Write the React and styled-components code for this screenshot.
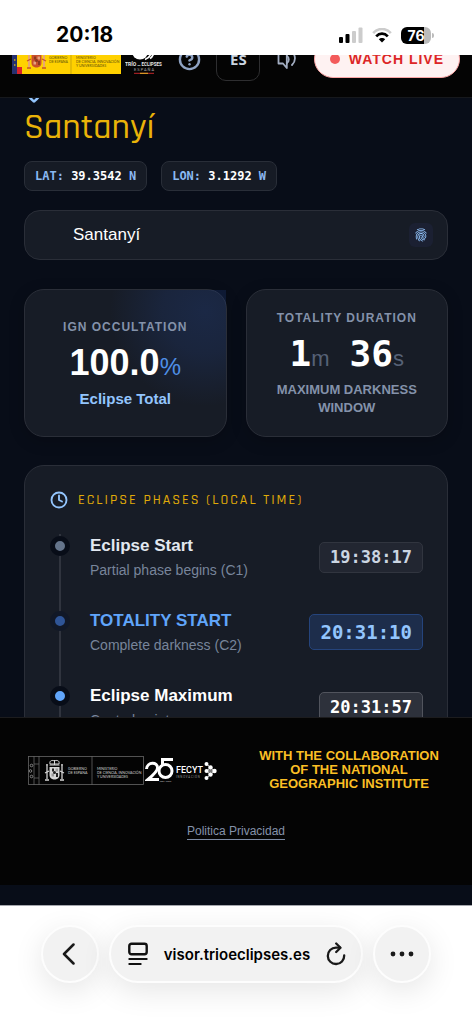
import React from "react";
import { useState } from "react";
import styled, { createGlobalStyle } from "styled-components";
import { CircleHelp, Clock, MapPin } from "lucide-react";
import { IoFingerPrint } from "react-icons/io5";

const phases = [
    { title: "Eclipse Start", text: "Partial phase begins (C1)", time: "19:38:17", kind: "start" },
    { title: "TOTALITY START", text: "Complete darkness (C2)", time: "20:31:10", kind: "totality" },
    { title: "Eclipse Maximum", text: "Central point", time: "20:31:57", kind: "maximum" },
];

const kinds = {
    start: { title: "#e2e8f0", dot: "#64748b", halo: "#080d18", time: "#cbd5e1", bg: "#222631", border: "#31353f" },
    totality: { title: "#60a5fa", dot: "#2f5597", halo: "#111827", time: "#93c5fd", bg: "#1d2d4b", border: "#25447c" },
    maximum: { title: "#ffffff", dot: "#60a5fa", halo: "#080d18", time: "#ffffff", bg: "#2d313b", border: "#51545d" },
};

export default function App() {

    const [place, setPlace] = useState("Santanyí");

    return (
        <Page>
            <Global />
            <StatusBar>
                <StatusTime>20:18</StatusTime>
                <StatusIcons>
                    <SignalIcon />
                    <WifiIcon />
                    <Battery><span>76</span></Battery>
                </StatusIcons>
            </StatusBar>

            <Header>
                <HeaderRow>
                    <HeaderLogos>
                        <GovernmentLogo />
                        <TrioLogo />
                    </HeaderLogos>
                    <IconButton type="button" aria-label="Help"><CircleHelp size={23} strokeWidth={2.5} /></IconButton>
                    <LangButton type="button">ES</LangButton>
                    <IconButton type="button" aria-label="Read aloud"><AudioIcon /></IconButton>
                    <LiveLink href="#live"><LiveDot />WATCH LIVE</LiveLink>
                </HeaderRow>
            </Header>

            <Main>
                <PinRow><MapPin size={20} strokeWidth={3} /></PinRow>
                <Title>Santanyí</Title>
                <Coords>
                    <Coord>LAT: <b>39.3542</b> N</Coord>
                    <Coord>LON: <b>3.1292</b> W</Coord>
                </Coords>

                <SearchBox>
                    <SearchInput aria-label="Location" value={place} onChange={(e) => setPlace(e.target.value)} />
                    <FingerButton type="button" aria-label="Use my location"><IoFingerPrint size={14} /></FingerButton>
                </SearchBox>

                <Cards>
                    <Card>
                        <GlowLayer><Glow /></GlowLayer>
                        <CardLabel>IGN OCCULTATION</CardLabel>
                        <Value>100.0<Percent>%</Percent></Value>
                        <Result>Eclipse Total</Result>
                    </Card>
                    <Card>
                        <CardLabel>TOTALITY DURATION</CardLabel>
                        <Duration>
                            <span>1<Unit>m</Unit></span>
                            <span>36<Unit>s</Unit></span>
                        </Duration>
                        <CardNote>MAXIMUM DARKNESS WINDOW</CardNote>
                    </Card>
                </Cards>

                <PhasesCard>
                    <PhasesTitle><Clock size={18} strokeWidth={2.5} />ECLIPSE PHASES (LOCAL TIME)</PhasesTitle>
                    <PhaseList>
                        {phases.map((phase) => (
                            <Phase key={phase.title}>
                                <Marker $kind={phase.kind} />
                                <div>
                                    <PhaseName $kind={phase.kind}>{phase.title}</PhaseName>
                                    <PhaseText>{phase.text}</PhaseText>
                                </div>
                                <Time $kind={phase.kind}>{phase.time}</Time>
                            </Phase>
                        ))}
                    </PhaseList>
                </PhasesCard>
            </Main>

            <Footer>
                <FooterRow>
                    <FooterLogos>
                        <GovernmentLogoMono />
                        <FecytLogo />
                    </FooterLogos>
                    <Collaboration>WITH THE COLLABORATION OF THE NATIONAL GEOGRAPHIC INSTITUTE</Collaboration>
                </FooterRow>
                <PrivacyLink href="#privacy">Politica Privacidad</PrivacyLink>
            </Footer>

            <BrowserBar>
                <RoundButton type="button" aria-label="Back"><BackIcon /></RoundButton>
                <AddressBar>
                    <BarButton type="button" aria-label="Page menu"><ReaderIcon /></BarButton>
                    <Address>visor.trioeclipses.es</Address>
                    <BarButton type="button" aria-label="Reload"><ReloadIcon /></BarButton>
                </AddressBar>
                <RoundButton type="button" aria-label="More"><MoreIcon /></RoundButton>
            </BrowserBar>
        </Page>
    );
};

function SignalIcon() {
    return (
        <svg width="24" height="16" viewBox="0 0 24 16">
            <rect x="0" y="10" width="4" height="6" rx="1" fill="#000" />
            <rect x="6.5" y="7" width="4" height="9" rx="1" fill="#000" />
            <rect x="13" y="4" width="4" height="12" rx="1" fill="#ccc" />
            <rect x="19.5" y="0.5" width="4" height="15.5" rx="1" fill="#ccc" />
        </svg>
    );
}

function WifiIcon() {
    return (
        <svg width="20" height="15" viewBox="0 0 20 15" fill="none">
            <path d="M1.2 5.2C6-.4 14-.4 18.8 5.2" stroke="#ccc" strokeWidth="2.6" />
            <path d="M4.2 8.4C7.5 4.8 12.5 4.8 15.8 8.4" stroke="#000" strokeWidth="2.7" />
            <path d="M10 14.6L6.8 11.3C8.5 9.6 11.5 9.6 13.2 11.3Z" fill="#000" />
        </svg>
    );
}

function AudioIcon() {
    return (
        <svg width="20" height="22" viewBox="0 0 20 22" fill="none" stroke="#a3aec2" strokeWidth="1.8" strokeLinejoin="round" strokeLinecap="round">
            <path d="M1.5 2v13.500h4.500l3.800 4.500V2z" />
            <path d="M10 8c2.400 1.500 2.400 5.500 0 7" />
            <path d="M14.500 3c4.500 4.500 4.500 10 .5 14" />
        </svg>
    );
}

function GovernmentLogo() {
    return (
        <svg width="109" height="30" viewBox="0 0 109 30" role="img" aria-label="Gobierno de España">
            <rect width="109" height="30" fill="#ffd100" />
            <rect width="5" height="30" fill="#26306f" />
            <rect x="5" y="23" width="5" height="7" fill="#d8232a" />
            <g fill="#ffd100">
                <circle cx="2.8" cy="16" r="0.8" />
                <circle cx="2.8" cy="21" r="0.8" />
            </g>
            <Crest x={15} y={4} main="#c8502d" dark="#8b3a20" light="#e6a27e" />
            <path d="M59 0v30" stroke="#a98d12" strokeWidth="0.6" />
            <g fontFamily="Lato, sans-serif" fontSize="3.5" fill="#5c4c0c">
                <text x="37" y="15">GOBIERNO</text>
                <text x="37" y="19">DE ESPAÑA</text>
                <text x="64" y="15">MINISTERIO</text>
                <text x="64" y="19">DE CIENCIA, INNOVACIÓN</text>
                <text x="64" y="23">Y UNIVERSIDADES</text>
            </g>
        </svg>
    );
}

function Crest({ x, y, main, dark, light }) {
    return (
        <g transform={`translate(${x} ${y})`}>
            <path d="M5 4C4 0 8 0 9.500 1 11 0 15 0 14 4z" fill="none" stroke={main} strokeWidth="1" />
            <path d="M9.500 0v5M4.500 5h10" stroke={main} strokeWidth="1" />
            <path d="M4.500 7h10v8c0 6-10 6-10 0z" fill={main} />
            <path d="M7 8.500h2v3H7zM11 13h2v4h-2z" fill={dark} />
            <path d="M10.500 8.500h2.500v3h-2.500zM6.500 13.500h2.500v3H6.500z" fill={light} />
            <circle cx="9.5" cy="12.5" r="1.5" fill={dark} />
            <path d="M2 6v13M17 6v13" stroke={light} strokeWidth="1.8" />
            <path d="M0 13l4-2M15 11l4 2M0 20h4M15 20h4M1 5h2M16 5h2" stroke={main} strokeWidth="1.3" />
        </g>
    );
}

function TrioLogo() {
    return (
        <svg width="38" height="30" viewBox="0 0 38 30" role="img" aria-label="Trío de Eclipses España">
            <circle cx="15" cy="7.5" r="8" fill="#fff" />
            <path d="M20 15.500c3-1 5-3 6-6M25 14.500c2-1 3-3 4-6" stroke="#fff" strokeWidth="1.8" fill="none" />
            <g fontFamily="Roboto, sans-serif" fontWeight="700" fill="#e8e8e8">
                <text x="0" y="22" fontSize="5">TRÍO</text>
                <text x="12.5" y="22" fontSize="2.5">DE</text>
                <text x="16.5" y="22" fontSize="4.5">ECLIPSES</text>
            </g>
            <text x="9" y="27" fontFamily="Roboto, sans-serif" fontSize="4" letterSpacing="1" fill="#a8a8a8">ESPAÑA</text>
            <path d="M9 29.300h20" stroke="#c3272b" strokeWidth="1" />
            <path d="M15 29.300h8" stroke="#e5b526" strokeWidth="1" />
        </svg>
    );
}

function GovernmentLogoMono() {
    return (
        <svg width="116" height="29" viewBox="0 0 116 29" role="img" aria-label="Gobierno de España">
            <g fill="none" stroke="#666" strokeWidth="0.8">
                <rect x="0.5" y="0.5" width="115" height="28" />
                <path d="M6 0v29M11 0v29M64 0v29M6 8h5M6 22h5" />
            </g>
            <g fill="none" stroke="#aaa" strokeWidth="0.7">
                <circle cx="3.5" cy="9.5" r="1.3" />
                <circle cx="2.5" cy="15" r="1.3" />
                <circle cx="3.5" cy="20.5" r="1.3" />
            </g>
            <Crest x={17} y={4} main="#d6d6d6" dark="#222" light="#999" />
            <g fontFamily="Lato, sans-serif" fontSize="3.6" fill="#d0d0d0">
                <text x="40" y="14">GOBIERNO</text>
                <text x="40" y="18">DE ESPAÑA</text>
                <text x="69" y="14">MINISTERIO</text>
                <text x="69" y="18">DE CIENCIA, INNOVACIÓN</text>
                <text x="69" y="22">Y UNIVERSIDADES</text>
            </g>
        </svg>
    );
}

function FecytLogo() {
    return (
        <svg width="72" height="26" viewBox="0 0 72 26" role="img" aria-label="FECYT Innovación">
            <g fill="none" stroke="#fff" strokeWidth="3">
                <path d="M1.500 12C2 4.500 13 4.500 12.500 11c0 3-3 6-9.500 11.500H14" />
                <path d="M28 2.500H17.500V9" />
                <circle cx="20.5" cy="14" r="6.5" />
            </g>
            <text x="14.5" y="25" fontFamily="Roboto, sans-serif" fontSize="2.5" fill="#bbb">2001-2026</text>
            <text x="31" y="16" fontFamily="Roboto, sans-serif" fontWeight="500" fontSize="9" fill="#fff">FECYT</text>
            <text x="31" y="21" fontFamily="Roboto, sans-serif" fontSize="2.8" letterSpacing="0.8" fill="#999">INNOVACIÓN</text>
            <g fill="#fff">
                <circle cx="61.5" cy="7" r="2" />
                <circle cx="61.5" cy="14" r="2" />
                <circle cx="61.5" cy="21" r="2" />
                <circle cx="65.5" cy="10.5" r="2.2" />
                <circle cx="65.5" cy="17.5" r="2.2" />
                <circle cx="69.5" cy="14" r="2.2" />
            </g>
            <path d="M61.500 7l8 7-8 7M61.500 14h8M61.500 14l4-3.500M61.500 14l4 3.500" stroke="#fff" strokeWidth="0.9" fill="none" />
        </svg>
    );
}

function BackIcon() {
    return (
        <svg width="16" height="22" viewBox="0 0 16 22" fill="none" stroke="#1a1a1a" strokeWidth="2.5" strokeLinecap="round" strokeLinejoin="round">
            <path d="M11.500 1.500L2 11l9.500 9.500" />
        </svg>
    );
}

function ReaderIcon() {
    return (
        <svg width="20" height="24" viewBox="0 0 20 24" fill="none" stroke="#111" strokeWidth="2.4" strokeLinecap="round">
            <rect x="1.3" y="1.8" width="17.4" height="10.4" rx="2.2" />
            <path d="M1.300 17h17.400M1.300 22h11.400" strokeWidth="2" />
        </svg>
    );
}

function ReloadIcon() {
    return (
        <svg width="20" height="24" viewBox="0 0 20 24" fill="none" stroke="#1a1a1a" strokeWidth="2.3" strokeLinecap="round" strokeLinejoin="round">
            <path d="M18.200 13.500A8.200 8.200 0 1 1 10 5.600h4" />
            <path d="M10.200 1.500l4.300 4.200-4.300 4.300" />
        </svg>
    );
}

function MoreIcon() {
    return (
        <svg width="24" height="6" viewBox="0 0 24 6" fill="#1a1a1a">
            <circle cx="3" cy="3" r="2.4" />
            <circle cx="12" cy="3" r="2.4" />
            <circle cx="21" cy="3" r="2.4" />
        </svg>
    );
}

const Global = createGlobalStyle`
    * {
        box-sizing: border-box;
    }

    body {
        margin: 0;
        background-color: #080d18;
        font-family: "Liberation Sans", Arial, sans-serif;
    }

    button, input {
        font: inherit;
        color: inherit;
        border: none;
        background: none;
        padding: 0;
        outline: none;
    }

    button {
        cursor: pointer;
    }

    h1, h2, h3, p, ol {
        margin: 0;
        padding: 0;
        font-weight: normal;
    }

    svg {
        display: block;
        flex: none;
    }
`

const Page = styled.div`
    display: flex;
    flex-direction: column;
    height: 100vh;
    background-color: #080d18;
`

const StatusBar = styled.div`
    display: flex;
    flex: none;
    justify-content: space-between;
    align-items: center;
    height: 55px;
    padding: 15px 41px 0 56px;
    background-color: #fff;
`

const StatusTime = styled.span`
    font-family: Inter, sans-serif;
    font-size: 21px;
    font-weight: 700;
    line-height: 24px;
    color: #000;
`

const StatusIcons = styled.div`
    display: flex;
    align-items: center;
    gap: 9px;
`

const Battery = styled.span`
    position: relative;
    display: flex;
    align-items: center;
    justify-content: center;
    width: 30px;
    height: 17px;
    border-radius: 6px;
    background: linear-gradient(90deg, #000 76%, #bbb 76%);
    font-family: Inter, sans-serif;
    font-size: 14px;
    font-weight: 700;
    color: #fff;

    &::after {
        content: "";
        position: absolute;
        right: -3px;
        width: 2px;
        height: 5px;
        border-radius: 0 2px 2px 0;
        background-color: #bbb;
    }
`

/* the header is scrolled half under the status bar */
const Header = styled.header`
    display: flex;
    flex: none;
    align-items: flex-end;
    height: 43px;
    overflow: hidden;
    background-color: #040404;
    border-bottom: 1px solid #16181c;
`

const HeaderRow = styled.div`
    display: flex;
    flex: 1;
    align-items: center;
    height: 76px;
    padding: 0 12px;
`

const HeaderLogos = styled.div`
    display: flex;
    gap: 4px;
`

const IconButton = styled.button`
    display: flex;
    align-items: center;
    justify-content: center;
    flex: 1;
    height: 44px;
    color: #8fa3c4;
`

const LangButton = styled.button`
    width: 44px;
    height: 44px;
    border: 1px solid #2e2e30;
    border-radius: 10px;
    font-family: "Noto Sans", sans-serif;
    font-size: 15px;
    font-weight: 700;
    color: #cbd5e1;
`

const LiveLink = styled.a`
    display: flex;
    align-items: center;
    gap: 9px;
    height: 38px;
    padding: 0 15px;
    border: 1px solid #fca5a5;
    border-radius: 19px;
    background-color: #fef2f2;
    font-size: 14px;
    font-weight: 700;
    letter-spacing: 1px;
    color: #dc2626;
    text-decoration: none;
    white-space: nowrap;
`

const LiveDot = styled.span`
    width: 10px;
    height: 10px;
    border-radius: 50%;
    background-color: #f35b5b;
`

const Main = styled.main`
    flex: 1 1 0;
    min-height: 0;
    padding: 0 24px;
    overflow: hidden;
`

const PinRow = styled.div`
    display: flex;
    align-items: flex-end;
    height: 5px;
    overflow: hidden;
    color: #93c5fd;
`

const Title = styled.h1`
    font-family: Rajdhani, Roboto, sans-serif;
    font-size: 36px;
    font-weight: 500;
    line-height: 50px;
    color: #eab308;
`

const Coords = styled.div`
    display: flex;
    gap: 14px;
    margin-top: 8px;
`

const Coord = styled.span`
    padding: 0 10px;
    border: 1px solid #292e38;
    border-radius: 8px;
    background-color: #161b25;
    font-family: "DejaVu Sans Mono", monospace;
    font-size: 12px;
    font-weight: 700;
    line-height: 28px;
    color: #8ab8f2;

    b {
        color: #fff;
    }
`

const SearchBox = styled.div`
    display: flex;
    align-items: center;
    height: 50px;
    margin-top: 19px;
    padding: 0 14px 0 48px;
    border: 1px solid #2a2e38;
    border-radius: 16px;
    background-color: #171c26;
`

const SearchInput = styled.input`
    flex: 1;
    min-width: 0;
    font-size: 17px;
    color: #fff;
`

const FingerButton = styled.button`
    display: flex;
    align-items: center;
    justify-content: center;
    width: 24px;
    height: 24px;
    border-radius: 6px;
    background-color: #1b2032;
    color: #93c5fd;
`

const Cards = styled.div`
    display: grid;
    grid-template-columns: 1fr 1fr;
    gap: 19px;
    margin-top: 29px;
`

const Card = styled.section`
    position: relative;
    display: flex;
    flex-direction: column;
    align-items: center;
    justify-content: center;
    padding: 19px 24px;
    border: 1px solid #2a2e38;
    border-radius: 20px;
    background-color: #171c26;
    text-align: center;
    box-shadow: 0 4px 16px rgba(0, 0, 0, 0.2);
`

const GlowLayer = styled.div`
    position: absolute;
    inset: 0;
    overflow: hidden;
`

const Glow = styled.div`
    position: absolute;
    top: -74px;
    right: -74px;
    width: 190px;
    height: 190px;
    background: radial-gradient(closest-side, rgba(37, 72, 150, 0.28), rgba(37, 72, 150, 0.2) 45%, transparent);
`

const CardLabel = styled.h2`
    position: relative;
    font-size: 12px;
    font-weight: 700;
    line-height: 18px;
    letter-spacing: 1px;
    color: #8492aa;
    white-space: nowrap;
`

const Value = styled.p`
    position: relative;
    margin: 7px 0;
    font-size: 36px;
    font-weight: 700;
    line-height: 40px;
    color: #fff;
`

const Percent = styled.span`
    font-size: 24px;
    font-weight: 400;
    line-height: 24px;
    color: #4f8fe6;
`

const Result = styled.p`
    position: relative;
    font-size: 15px;
    font-weight: 700;
    line-height: 18px;
    color: #93c5fd;
`

const Duration = styled(Value)`
    display: flex;
    gap: 20px;
    font-family: "DejaVu Sans Mono", monospace;
`

const Unit = styled.span`
    font-family: "Liberation Sans", Arial, sans-serif;
    font-size: 22px;
    font-weight: 400;
    line-height: 24px;
    color: #566176;
`

const CardNote = styled.p`
    font-size: 13px;
    font-weight: 700;
    line-height: 18px;
    color: #8492aa;
`

const PhasesCard = styled.section`
    margin-top: 28px;
    padding: 25px 24px 25px 25px;
    border: 1px solid #2a2e38;
    border-radius: 20px;
    background-color: #171c26;
`

const PhasesTitle = styled.h2`
    display: flex;
    align-items: center;
    gap: 10px;
    font-family: Rajdhani, Roboto, sans-serif;
    font-size: 14px;
    font-weight: 500;
    line-height: 18px;
    letter-spacing: 2px;
    color: #e0ab08;
    white-space: nowrap;

    svg {
        color: #93c5fd;
    }
`

const PhaseList = styled.ol`
    position: relative;
    display: flex;
    flex-direction: column;
    gap: 29px;
    margin-top: 25px;
    padding-bottom: 28px;
    list-style: none;

    &::before {
        content: "";
        position: absolute;
        top: 0;
        bottom: 0;
        left: 9px;
        width: 2px;
        background-color: #30343e;
    }
`

const Phase = styled.li`
    display: grid;
    grid-template-columns: 20px 1fr auto;
    column-gap: 20px;
    align-items: center;
`

const Marker = styled.span`
    position: relative;
    align-self: start;
    justify-self: center;
    width: 20px;
    height: 20px;
    margin-top: 2px;
    border: 5px solid ${(props) => kinds[props.$kind].halo};
    border-radius: 50%;
    background-color: ${(props) => kinds[props.$kind].dot};
`

const PhaseName = styled.h3`
    font-size: 17px;
    font-weight: 700;
    line-height: 24px;
    color: ${(props) => kinds[props.$kind].title};
    white-space: nowrap;
`

const PhaseText = styled.p`
    padding-top: 2px;
    font-size: 14px;
    line-height: 20px;
    color: #78859b;
    white-space: nowrap;
`

const Time = styled.time`
    padding: 0 10px;
    border: 1px solid ${(props) => kinds[props.$kind].border};
    border-radius: 5px;
    background-color: ${(props) => kinds[props.$kind].bg};
    font-family: "DejaVu Sans Mono", monospace;
    font-size: ${(props) => (props.$kind === "totality" ? "19px" : "17px")};
    font-weight: 700;
    line-height: ${(props) => (props.$kind === "totality" ? "34px" : "29px")};
    color: ${(props) => kinds[props.$kind].time};
`

const Footer = styled.footer`
    display: flex;
    flex: none;
    flex-direction: column;
    align-items: center;
    margin-bottom: 20px;
    padding: 31px 28px 45px;
    border-top: 1px solid #1c1c1e;
    background-color: #040404;
`

const FooterRow = styled.div`
    display: flex;
    align-items: center;
    align-self: stretch;
    justify-content: space-between;
`

const FooterLogos = styled.div`
    display: flex;
    align-items: center;
    gap: 1px;
`

const Collaboration = styled.p`
    width: 190px;
    font-size: 13px;
    font-weight: 700;
    line-height: 14px;
    text-align: center;
    color: #fbbf24;
`

const PrivacyLink = styled.a`
    margin-top: 33px;
    border-bottom: 1px solid #7c8aa3;
    font-size: 12px;
    line-height: 15px;
    color: #8492aa;
    text-decoration: none;
`

const BrowserBar = styled.nav`
    display: flex;
    flex: none;
    gap: 10px;
    height: 118px;
    padding: 19px 41px 0;
    border-top: 1px solid #a5a7ad;
    background-color: #fff;
    overflow: hidden;
`

const RoundButton = styled.button`
    display: flex;
    align-items: center;
    justify-content: center;
    width: 58px;
    height: 58px;
    border: 2px solid #fdfdfd;
    border-radius: 50%;
    background-color: #f2f2f2;
    box-shadow: 0 8px 30px rgba(0, 0, 0, 0.1);
`

const AddressBar = styled.div`
    display: flex;
    flex: 1;
    align-items: center;
    justify-content: space-between;
    height: 58px;
    padding: 0 15px 0 17px;
    border: 2px solid #fdfdfd;
    border-radius: 29px;
    background-color: #f2f2f2;
    box-shadow: 0 8px 30px rgba(0, 0, 0, 0.1);
`

const BarButton = styled.button`
    display: flex;
`

const Address = styled.span`
    font-family: Inter, sans-serif;
    font-size: 15px;
    font-weight: 600;
    color: #000;
`
